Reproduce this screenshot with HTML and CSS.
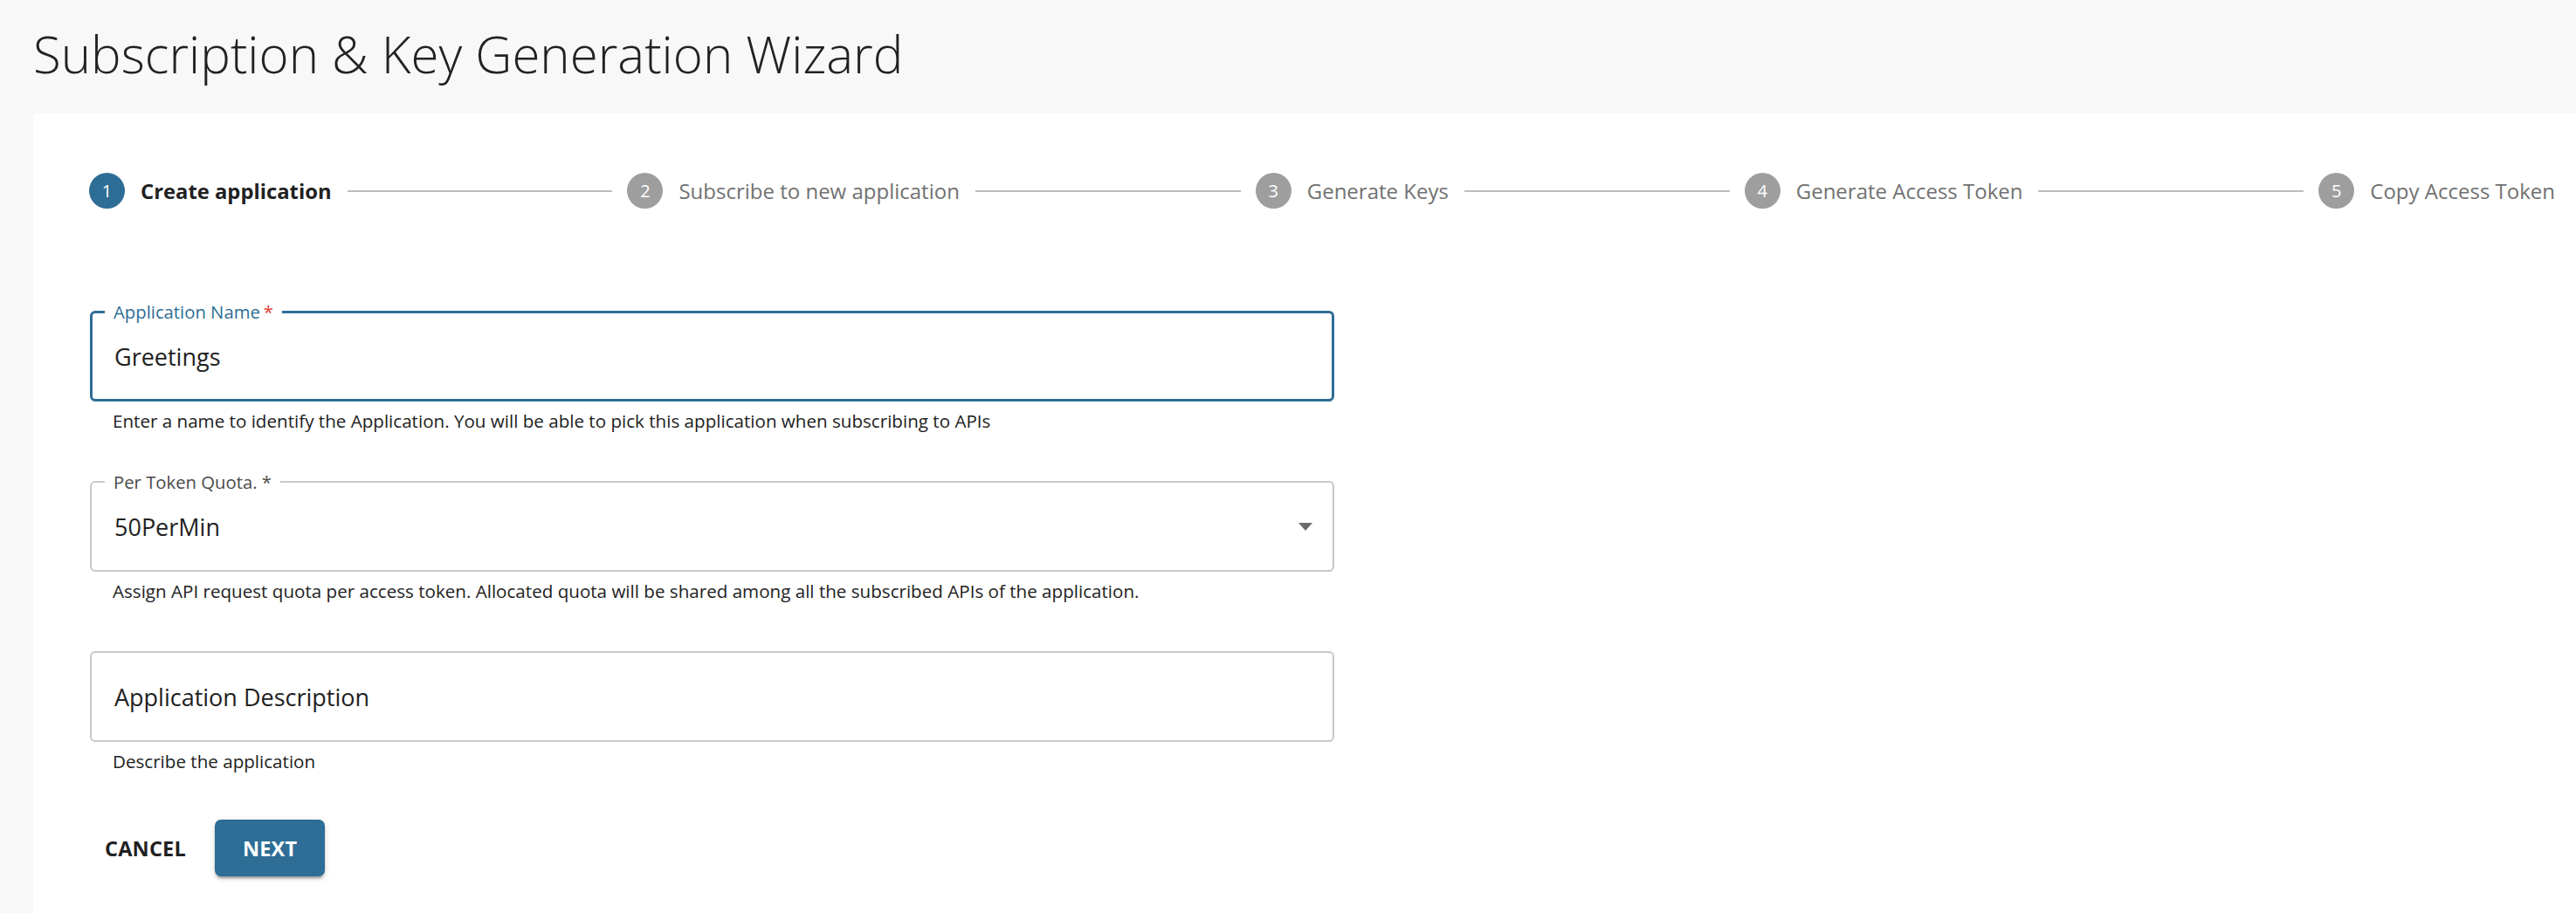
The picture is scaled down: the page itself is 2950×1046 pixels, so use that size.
FILE: index.html
```html
<!DOCTYPE html>
<html lang="en">
<head>
<meta charset="utf-8">
<title>Subscription &amp; Key Generation Wizard</title>
<link rel="stylesheet" href="styles.css">
</head>
<body>
<header class="page-head">
  <h1 class="page-title">Subscription &amp; Key Generation Wizard</h1>
</header>
<main class="card">
  <ol class="stepper">
    <li class="step active"><span class="step-icon">1</span><span class="step-label">Create application</span></li>
    <li class="connector"></li>
    <li class="step"><span class="step-icon">2</span><span class="step-label">Subscribe to new application</span></li>
    <li class="connector"></li>
    <li class="step"><span class="step-icon">3</span><span class="step-label">Generate Keys</span></li>
    <li class="connector"></li>
    <li class="step"><span class="step-icon">4</span><span class="step-label">Generate Access Token</span></li>
    <li class="connector"></li>
    <li class="step"><span class="step-icon">5</span><span class="step-label">Copy Access Token</span></li>
  </ol>

  <form class="form">
    <div class="form-group">
      <div class="field focused">
        <span class="field-label">Application Name<span class="req">*</span></span>
        <span class="field-value">Greetings</span>
      </div>
      <p class="helper">Enter a name to identify the Application. You will be able to pick this application when subscribing to APIs</p>
    </div>

    <div class="form-group">
      <div class="field select">
        <span class="field-label">Per Token Quota. *</span>
        <span class="field-value">50PerMin</span>
        <span class="caret"></span>
      </div>
      <p class="helper">Assign API request quota per access token. Allocated quota will be shared among all the subscribed APIs of the application.</p>
    </div>

    <div class="form-group">
      <div class="field">
        <span class="field-value">Application Description</span>
      </div>
      <p class="helper">Describe the application</p>
    </div>

    <div class="actions">
      <button type="button" class="btn btn-text">CANCEL</button>
      <button type="button" class="btn btn-primary">NEXT</button>
    </div>
  </form>
</main>
</body>
</html>
```
FILE: styles.css
```css
* { box-sizing: border-box; }

html, body {
  margin: 0;
  padding: 0;
}

body {
  background: #f8f8f8;
  font-family: "Open Sans", "Noto Sans", "Liberation Sans", sans-serif;
  color: #212121;
  width: 2950px;
  height: 1046px;
  overflow: hidden;
}

.page-head {
  height: 130px;
  padding-left: 38px;
  display: flex;
  align-items: flex-start;
}

.page-title {
  margin: 0;
  margin-top: 22px;
  font-size: 58.2px;
  line-height: 80px;
  font-weight: 300;
  color: #222222;
  letter-spacing: 0;
}

.card {
  margin-left: 38px;
  background: #ffffff;
  border-radius: 6px 0 0 0;
  height: 916px;
  padding: 68px 24px 0 64px;
}

.stepper {
  list-style: none;
  margin: 0;
  padding: 0;
  display: flex;
  align-items: center;
  height: 41px;
}

.step {
  display: flex;
  align-items: center;
  gap: 18px;
  flex: none;
}

.step-icon {
  width: 41px;
  height: 41px;
  border-radius: 50%;
  background: #9e9e9e;
  color: #ffffff;
  font-size: 20px;
  display: flex;
  align-items: center;
  justify-content: center;
  line-height: 1;
}

.step.active .step-icon {
  background: #2d6d96;
}

.step-label {
  font-size: 24px;
  color: #717171;
  white-space: nowrap;
}

.step.active .step-label {
  color: #212121;
  font-weight: 700;
  font-size: 23.8px;
}

.connector {
  flex: 1;
  height: 2px;
  background: #bdbdbd;
  margin: 0 17px 0 18px;
}

.form {
  width: 1425px;
  margin-left: 1px;
  padding-top: 117px;
  display: flex;
  flex-direction: column;
}

.form-group {
  margin-bottom: 52px;
}

.field {
  position: relative;
  height: 104px;
  border: 2px solid #c8c8c8;
  border-radius: 6px;
  display: flex;
  align-items: center;
  padding: 0 23px 0 26px;
}

.field.focused {
  border: 3px solid #2d6d96;
  padding-left: 25px;
}

.field-label {
  position: absolute;
  left: 15px;
  top: -13px;
  padding: 0 10px;
  background: #ffffff;
  font-size: 20.3px;
  line-height: 24px;
  color: #4a4a4a;
  white-space: nowrap;
}

.field.focused .field-label {
  left: 14px;
  top: -14px;
  color: #2d6d96;
}

.req {
  color: #e53935;
  margin-left: 4px;
}

.field-value {
  font-size: 27px;
  color: #212121;
}

.caret {
  margin-left: auto;
  width: 0;
  height: 0;
  border-left: 8.5px solid transparent;
  border-right: 8.5px solid transparent;
  border-top: 9px solid #6b6b6b;
}

.helper {
  margin: 5px 0 0 26px;
  font-size: 20.6px;
  line-height: 34px;
  color: #212121;
}

.actions {
  display: flex;
  align-items: center;
  gap: 20px;
  margin-top: -2px;
  margin-left: 4px;
}

.btn {
  font-family: "Open Sans", "Noto Sans", "Liberation Sans", sans-serif;
  font-size: 23.5px;
  font-weight: 700;
  letter-spacing: 0.2px;
  border: none;
  height: 65px;
  border-radius: 7px;
  cursor: pointer;
}

.btn-text {
  background: transparent;
  color: #212121;
  padding: 0 13px;
}

.btn-primary {
  background: #2d6d96;
  color: #ffffff;
  padding: 0 32px;
  box-shadow: 0 5px 2px -3px rgba(0, 0, 0, 0.2), 0 3px 3px 0 rgba(0, 0, 0, 0.14), 0 2px 8px 0 rgba(0, 0, 0, 0.12);
}
```
